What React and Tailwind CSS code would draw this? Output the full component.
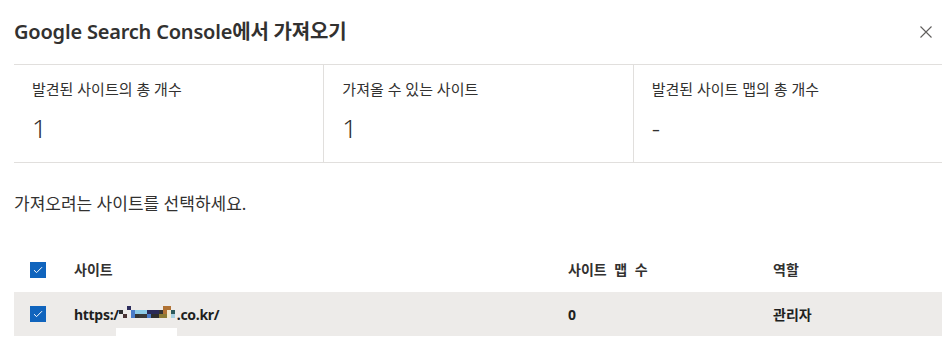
import React from 'react';

const stats = [
  { label: '발견된 사이트의 총 개수', value: '1' },
  { label: '가져올 수 있는 사이트', value: '1' },
  { label: '발견된 사이트 맵의 총 개수', value: '-' },
];

// redacted part of the url, drawn as coloured pixel blocks
const pixels = [
  [0, 4, '#2e2e2e'], [4, 8, '#4a3434'], [8, 0, '#2c2c5c'], [12, 4, '#4a7cc9'], [12, 8, '#4a7cc9'],
  [16, 4, '#8ccbe6'], [16, 8, '#343434'], [20, 4, '#8ccbe6'], [24, 4, '#8ccbe6'], [20, 8, '#3a3a3a'],
  [24, 8, '#3a3a3a'], [28, 4, '#2a2a58'], [28, 8, '#4a7cc9'], [32, 4, '#2a2a58'], [36, 4, '#2a2a58'],
  [32, 8, '#2e2e2e'], [36, 8, '#2e2e2e'], [40, 4, '#333333'], [40, 8, '#8a7a34'], [44, 0, '#b07234'],
  [44, 4, '#b07234'], [44, 8, '#8a7a34'], [48, 0, '#b07234'], [48, 4, '#f2ead0'], [48, 8, '#f2ead0'],
  [52, 4, '#2c5a5c'], [52, 8, '#a8d0e0'],
];

const Checkbox = () => (
  <span className="w-[16px] h-[16px] bg-[#1064bd] flex items-center justify-center">
    <svg width="10" height="8" viewBox="0 0 10 8" fill="none">
      <path d="M1 4.2 L3.6 6.6 L9 1.2" stroke="#fff" strokeWidth="1" />
    </svg>
  </span>
);

export default function App() {
  return (
    <div
      className="w-[948px] h-[351px] bg-white overflow-hidden text-[#323130]"
      style={{ fontFamily: '"Noto Sans", "Noto Sans CJK KR", sans-serif' }}
    >
      <div className="h-[64px] flex items-center justify-between pl-[14px] pr-[16px]">
        <h1 className="text-[20px] font-semibold tracking-[-0.2px]">Google Search Console에서 가져오기</h1>
        <svg width="12" height="12" viewBox="0 0 12 12" fill="none">
          <path d="M0.5 0.5 L11.5 11.5 M11.5 0.5 L0.5 11.5" stroke="#605e5c" strokeWidth="1.1" />
        </svg>
      </div>

      <div className="ml-[14px] mr-[6px] grid grid-cols-3 border-y border-[#e1dfdd] h-[99px]">
        {stats.map((s, i) => (
          <div key={s.label} className={`pl-[18px] pt-[14px] ${i > 0 ? 'border-l border-[#e1dfdd]' : ''}`}>
            <p className="text-[15px] leading-[20px]">{s.label}</p>
            <p className="mt-[11px] text-[26px] leading-[36px] font-light">{s.value}</p>
          </div>
        ))}
      </div>

      <p className="pl-[14px] mt-[30px] text-[17px] leading-[22px]">가져오려는 사이트를 선택하세요.</p>

      <div className="ml-[14px] mr-[6px] mt-[32px]">
        <div className="h-[45px] flex items-center text-[14px] font-semibold [word-spacing:4px]">
          <div className="w-[60px] pl-[16px]"><Checkbox /></div>
          <div className="w-[494px]">사이트</div>
          <div className="w-[205px]">사이트 맵 수</div>
          <div>역할</div>
        </div>
        <div className="h-[44px] flex items-center bg-[#edebe9] text-[14px] font-bold text-[#201f1e]">
          <div className="w-[60px] pl-[16px]"><Checkbox /></div>
          <div className="w-[494px] flex items-center relative">
            <span className="tracking-[-0.3px]">https:/</span>
            <svg width="58" height="12" viewBox="0 0 58 12" className="-mt-[4px]">
              {pixels.map(([x, y, c], k) => (
                <rect key={k} x={x} y={y} width="4" height="4" fill={c} />
              ))}
            </svg>
            <span className="tracking-[-0.3px]">.co.kr/</span>
            <span className="absolute left-[42px] top-[24px] w-[61px] h-[10px] bg-white" />
          </div>
          <div className="w-[205px]">0</div>
          <div>관리자</div>
        </div>
      </div>
    </div>
  );
}
